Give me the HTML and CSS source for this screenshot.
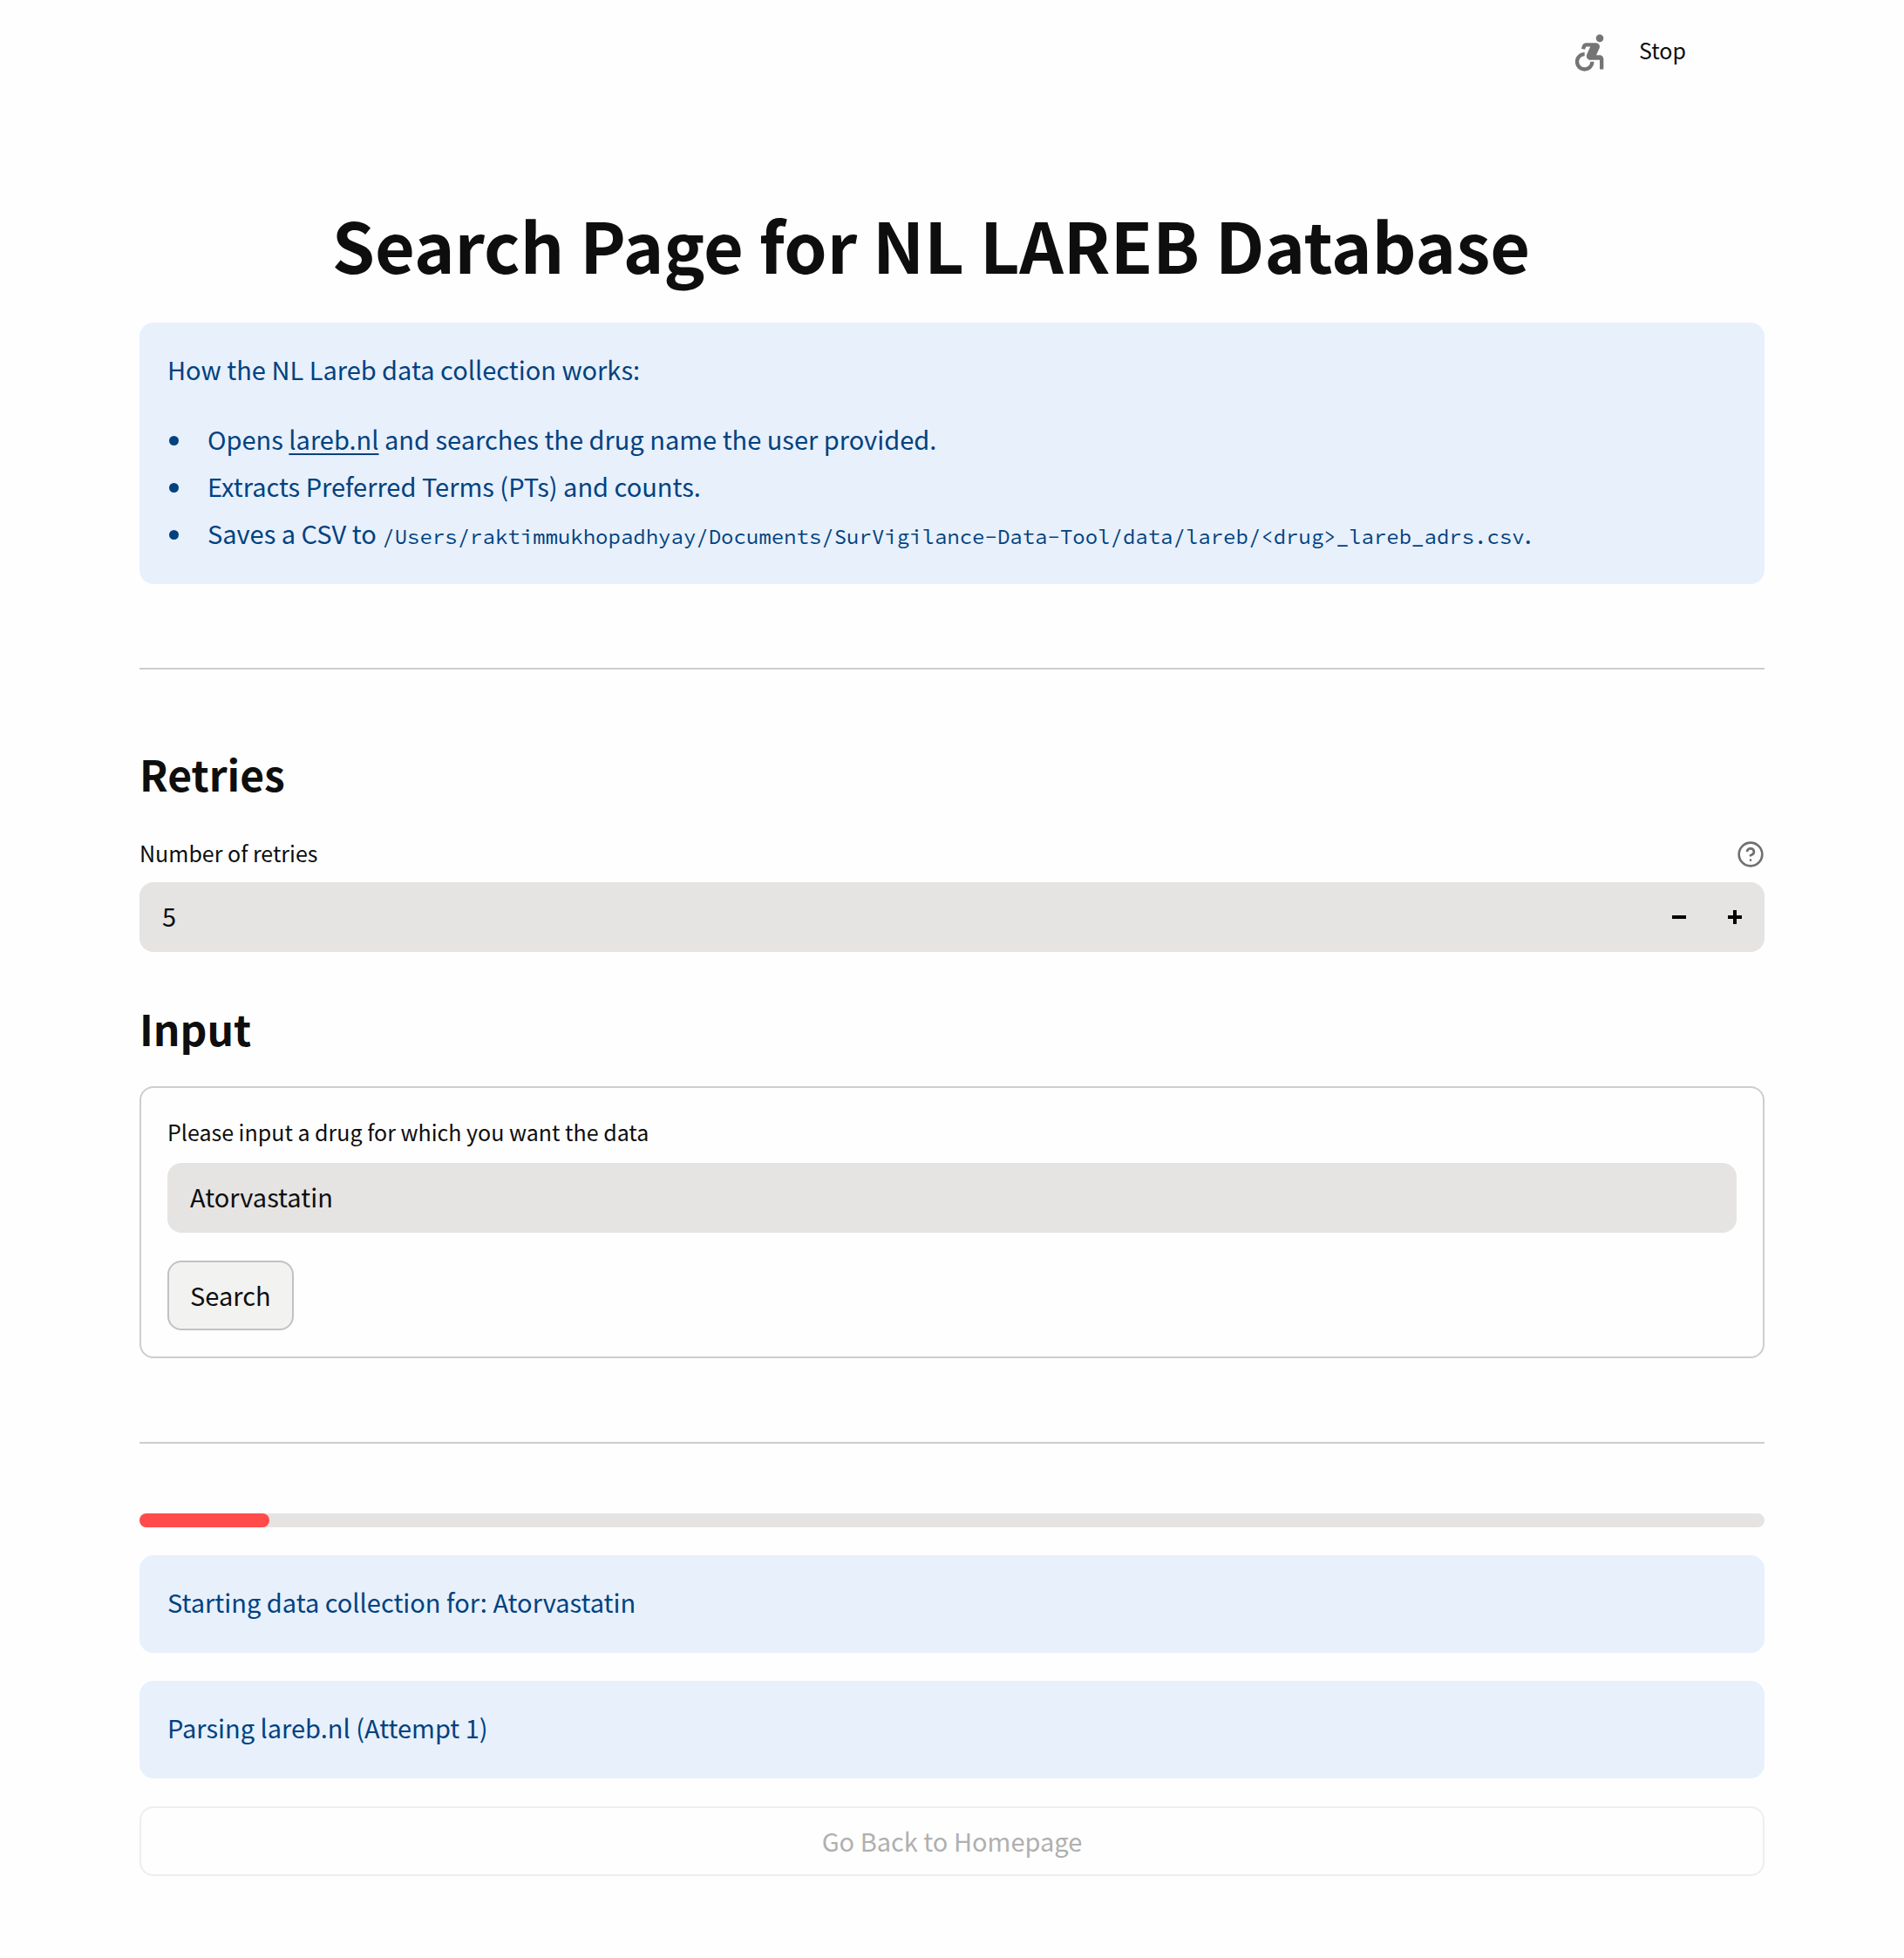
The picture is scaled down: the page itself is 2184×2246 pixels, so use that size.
FILE: index.html
```html
<!DOCTYPE html>
<html lang="en">
<head>
  <meta charset="UTF-8">
  <meta name="viewport" content="width=device-width, initial-scale=1.0">
  <title>Search Page for NL LAREB Database</title>
  <link rel="stylesheet" href="styles.css">
</head>
<body>
  <header class="toolbar">
    <svg class="running-icon" viewBox="0 0 24 24" aria-hidden="true">
      <circle cx="18" cy="4.54" r="2"/>
      <path d="M15 17h-2c0 1.65-1.35 3-3 3s-3-1.35-3-3 1.35-3 3-3v-2c-2.76 0-5 2.24-5 5s2.24 5 5 5 5-2.24 5-5zm3-3.5h-1.86l1.67-3.67C18.42 8.5 17.44 7 15.96 7h-5.2c-.81 0-1.54.47-1.87 1.2L8.22 10l1.92.53.65-1.53H13l-1.83 4.1c-.6 1.33.39 2.9 1.85 2.9H18v5h2v-5.5c0-1.1-.9-2-2-2z"/>
    </svg>
    <button type="button" class="stop-btn">Stop</button>
  </header>

  <main>
    <h1>Search Page for NL LAREB Database</h1>

    <section class="alert">
      <p>How the NL Lareb data collection works:</p>
      <ul>
        <li>Opens <a href="https://www.lareb.nl">lareb.nl</a> and searches the drug name the user provided.</li>
        <li>Extracts Preferred Terms (PTs) and counts.</li>
        <li>Saves a CSV to <code>/Users/raktimmukhopadhyay/Documents/SurVigilance-Data-Tool/data/lareb/&lt;drug&gt;_lareb_adrs.csv</code>.</li>
      </ul>
    </section>

    <hr>

    <section class="retries">
      <h3>Retries</h3>
      <div class="label-row">
        <label for="retries">Number of retries</label>
        <button type="button" class="help-btn" aria-label="Help">
          <svg viewBox="0 0 24 24">
            <circle cx="12" cy="12" r="10"/>
            <path d="M9.09 9a3 3 0 0 1 5.83 1c0 2-3 3-3 3"/>
            <path d="M12 17h.01"/>
          </svg>
        </button>
      </div>
      <div class="number-field">
        <input type="text" inputmode="numeric" id="retries" name="retries" value="5">
        <button type="button" class="step-btn" aria-label="Decrease">
          <svg viewBox="0 0 16 16"><path d="M0 6h16v4H0z"/></svg>
        </button>
        <button type="button" class="step-btn" aria-label="Increase">
          <svg viewBox="0 0 16 16"><path d="M6 0h4v6h6v4h-6v6H6v-6H0V6h6z"/></svg>
        </button>
      </div>
    </section>

    <section class="search">
      <h3>Input</h3>
      <form class="search-form">
        <label for="drug">Please input a drug for which you want the data</label>
        <input type="text" id="drug" name="drug" value="Atorvastatin">
        <button type="button" class="btn">Search</button>
      </form>
    </section>

    <hr>

    <section class="status">
      <div class="progress" role="progressbar" aria-label="Progress" aria-valuenow="8" aria-valuemin="0" aria-valuemax="100">
        <div class="progress-bar" style="width: 8%"></div>
      </div>
      <div class="alert">Starting data collection for: Atorvastatin</div>
      <div class="alert">Parsing lareb.nl (Attempt 1)</div>
      <button type="button" class="btn btn-home" disabled>Go Back to Homepage</button>
    </section>
  </main>
</body>
</html>
```

FILE: styles.css
```css
* {
  box-sizing: border-box;
}
body {
  margin: 0;
  background: #fefefe;
  color: #0e0e0e;
  font-family: "Noto Sans CJK SC", sans-serif;
  font-size: 29px;
  line-height: 48px;
}
button, input {
  font: inherit;
  color: inherit;
}
button {
  cursor: pointer;
}

/* top bar */
.toolbar {
  display: flex;
  justify-content: flex-end;
  align-items: center;
  gap: 32px;
  height: 120px;
  padding-right: 250px;
}
.running-icon {
  width: 52px;
  height: 52px;
  fill: #757575;
}
.stop-btn {
  padding: 0 0 6px;
  border: none;
  background: none;
  font-size: 25px;
}

main {
  padding: 107px 160px 94px;
}
h1, h3 {
  margin: 0;
  font-weight: 700;
}
h1 {
  padding: 0 48px 37px 0;
  font-size: 79px;
  line-height: 106px;
  text-align: center;
}
h3 {
  font-size: 48px;
  line-height: 78px;
}
hr {
  height: 2px;
  margin: 96px 0 80px;
  border: none;
  background: #cdcdcd;
}

.alert {
  padding: 29px 32px 35px;
  border-radius: 16px;
  background: #e8f0fc;
  color: #004280;
}
.alert p {
  margin: 0 0 32px;
}
.alert a {
  color: inherit;
  text-underline-offset: 4px;
}
.alert ul {
  margin: 0;
  padding-left: 31px;
}
.alert li {
  padding-left: 15px;
}
.alert li + li {
  margin-top: 6px;
}
.alert code {
  font-family: "Source Code Pro", "Liberation Mono", monospace;
  font-size: 24px;
  line-height: 24px;
}

/* inputs */
label {
  padding-bottom: 4px;
  font-size: 25px;
  line-height: 40px;
}
input {
  width: 100%;
  height: 80px;
  padding: 0 26px 4px;
  border: none;
  border-radius: 16px;
  background: #e5e4e2;
}
.label-row {
  display: flex;
  justify-content: space-between;
  align-items: center;
  margin: 32px 0 10px;
}
.help-btn {
  display: flex;
  padding: 0;
  border: none;
  background: none;
}
.help-btn svg {
  width: 32px;
  height: 32px;
  fill: none;
  stroke: #707070;
  stroke-width: 2;
  stroke-linecap: round;
  stroke-linejoin: round;
}
.number-field {
  display: flex;
  padding-right: 2px;
  border-radius: 16px;
  background: #e5e4e2;
}
.number-field input {
  flex: 1;
  background: none;
}
.step-btn {
  display: flex;
  align-items: center;
  justify-content: center;
  width: 64px;
  padding: 0;
  border: none;
  background: none;
}
.step-btn svg {
  width: 16px;
  height: 16px;
}

.search {
  margin-top: 48px;
}
.search-form {
  display: flex;
  flex-direction: column;
  align-items: flex-start;
  margin-top: 28px;
  padding: 30px;
  border: 2px solid #cdcdcd;
  border-radius: 16px;
}
.search-form input {
  margin: 12px 0 32px;
}
.btn {
  height: 80px;
  padding: 0 24px 2px;
  border: 2px solid #c2c2c2;
  border-radius: 16px;
  background: #f2f2f0;
}

/* progress and messages */
.status {
  display: flex;
  flex-direction: column;
  gap: 32px;
}
.progress {
  height: 16px;
  border-radius: 8px;
  background: #e5e4e2;
}
.progress-bar {
  height: 100%;
  border-radius: 8px;
  background: #ff4b4b;
}
.btn-home {
  border-color: #eeeeee;
  background: none;
  color: #b0b0b0;
  cursor: default;
}
```
